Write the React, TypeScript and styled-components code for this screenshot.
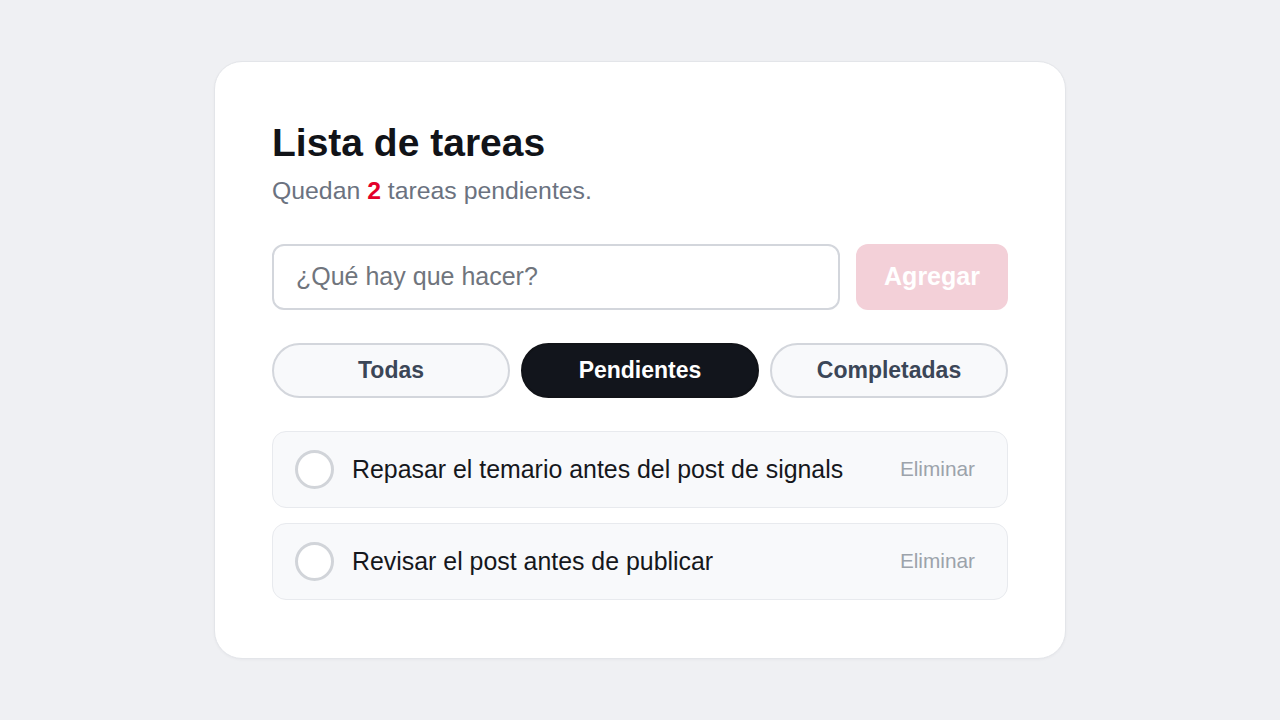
import React, { useState } from "react";
import styled, { createGlobalStyle } from "styled-components";

type Task = { id: number; text: string; done: boolean };
type Filter = "all" | "pending" | "done";

const GlobalStyle = createGlobalStyle`
  * { box-sizing: border-box; }
  html, body { margin: 0; padding: 0; }
  body {
    background: #eff0f3;
    font-family: "Liberation Sans", Arial, sans-serif;
  }
`;

const Page = styled.main`
  min-height: 100vh;
  display: flex;
  align-items: center;
  justify-content: center;
`;

const Card = styled.section`
  width: 852px;
  background: #ffffff;
  border: 1px solid #e3e5e9;
  border-radius: 28px;
  padding: 58px 57px 58px;
  box-shadow: 0 1px 3px rgba(15, 23, 42, 0.04);
`;

const Title = styled.h1`
  margin: 0;
  font-size: 39px;
  line-height: 1.2;
  font-weight: 700;
  color: #111318;
`;

const Subtitle = styled.p`
  margin: 5px 0 0;
  font-size: 24.8px;
  line-height: 1.5;
  color: #6b7280;

  strong {
    color: #e3002b;
    font-weight: 700;
  }
`;

const Form = styled.form`
  display: flex;
  gap: 16px;
  margin-top: 35px;
`;

const Input = styled.input`
  flex: 1;
  height: 66px;
  padding: 0 22px;
  border: 2px solid #d3d6dc;
  border-radius: 12px;
  font-family: inherit;
  font-size: 25px;
  color: #111318;
  outline: none;

  &::placeholder {
    color: #70757d;
  }
`;

const AddButton = styled.button`
  width: 152px;
  height: 66px;
  border: none;
  border-radius: 12px;
  background: #f3d0d8;
  color: #ffffff;
  font-family: inherit;
  font-size: 25px;
  font-weight: 700;
`;

const Filters = styled.div`
  display: grid;
  grid-template-columns: repeat(3, 1fr);
  gap: 11px;
  margin-top: 33px;
`;

const FilterButton = styled.button<{ $active: boolean }>`
  height: 55px;
  border-radius: 999px;
  border: 2px solid ${(p) => (p.$active ? "#111318" : "#d3d6dc")};
  background: ${(p) => (p.$active ? "#12151c" : "#f8f9fb")};
  color: ${(p) => (p.$active ? "#ffffff" : "#3b4657")};
  font-family: inherit;
  font-size: 23px;
  font-weight: 700;
  cursor: pointer;
`;

const List = styled.ul`
  list-style: none;
  margin: 33px 0 0;
  padding: 0;
  display: flex;
  flex-direction: column;
  gap: 15px;
`;

const Item = styled.li`
  display: flex;
  align-items: center;
  gap: 18px;
  height: 77px;
  padding: 0 22px;
  background: #f8f9fb;
  border: 1px solid #e8eaee;
  border-radius: 14px;
`;

const Check = styled.button<{ $done: boolean }>`
  flex: none;
  width: 39px;
  height: 39px;
  border-radius: 50%;
  border: 3px solid #d1d4d9;
  background: ${(p) => (p.$done ? "#12151c" : "#ffffff")};
  padding: 0;
  cursor: pointer;
`;

const Text = styled.span`
  flex: 1;
  font-size: 24.9px;
  color: #15171c;
`;

const Remove = styled.button`
  border: none;
  background: none;
  padding: 6px 10px;
  font-family: inherit;
  font-size: 20.8px;
  color: #9ca3ab;
  cursor: pointer;
`;

export default function App() {
  const [tasks, setTasks] = useState<Task[]>([
    { id: 1, text: "Repasar el temario antes del post de signals", done: false },
    { id: 2, text: "Revisar el post antes de publicar", done: false },
  ]);
  const [filter, setFilter] = useState<Filter>("pending");
  const [draft, setDraft] = useState("");

  const pending = tasks.filter((t) => !t.done).length;
  const visible = tasks.filter((t) =>
    filter === "all" ? true : filter === "pending" ? !t.done : t.done
  );

  const filters: { key: Filter; label: string }[] = [
    { key: "all", label: "Todas" },
    { key: "pending", label: "Pendientes" },
    { key: "done", label: "Completadas" },
  ];

  return (
    <>
      <GlobalStyle />
      <Page>
        <Card>
          <Title>Lista de tareas</Title>
          <Subtitle>
            Quedan <strong>{pending}</strong> tareas pendientes.
          </Subtitle>
          <Form
            onSubmit={(e) => {
              e.preventDefault();
              if (!draft.trim()) return;
              setTasks([...tasks, { id: Date.now(), text: draft.trim(), done: false }]);
              setDraft("");
            }}
          >
            <Input
              placeholder="¿Qué hay que hacer?"
              value={draft}
              onChange={(e) => setDraft(e.target.value)}
            />
            <AddButton type="submit" disabled={!draft.trim()}>
              Agregar
            </AddButton>
          </Form>
          <Filters>
            {filters.map((f) => (
              <FilterButton
                key={f.key}
                $active={filter === f.key}
                onClick={() => setFilter(f.key)}
              >
                {f.label}
              </FilterButton>
            ))}
          </Filters>
          <List>
            {visible.map((t) => (
              <Item key={t.id}>
                <Check
                  $done={t.done}
                  aria-label="Completar"
                  onClick={() =>
                    setTasks(tasks.map((x) => (x.id === t.id ? { ...x, done: !x.done } : x)))
                  }
                />
                <Text>{t.text}</Text>
                <Remove onClick={() => setTasks(tasks.filter((x) => x.id !== t.id))}>
                  Eliminar
                </Remove>
              </Item>
            ))}
          </List>
        </Card>
      </Page>
    </>
  );
}
